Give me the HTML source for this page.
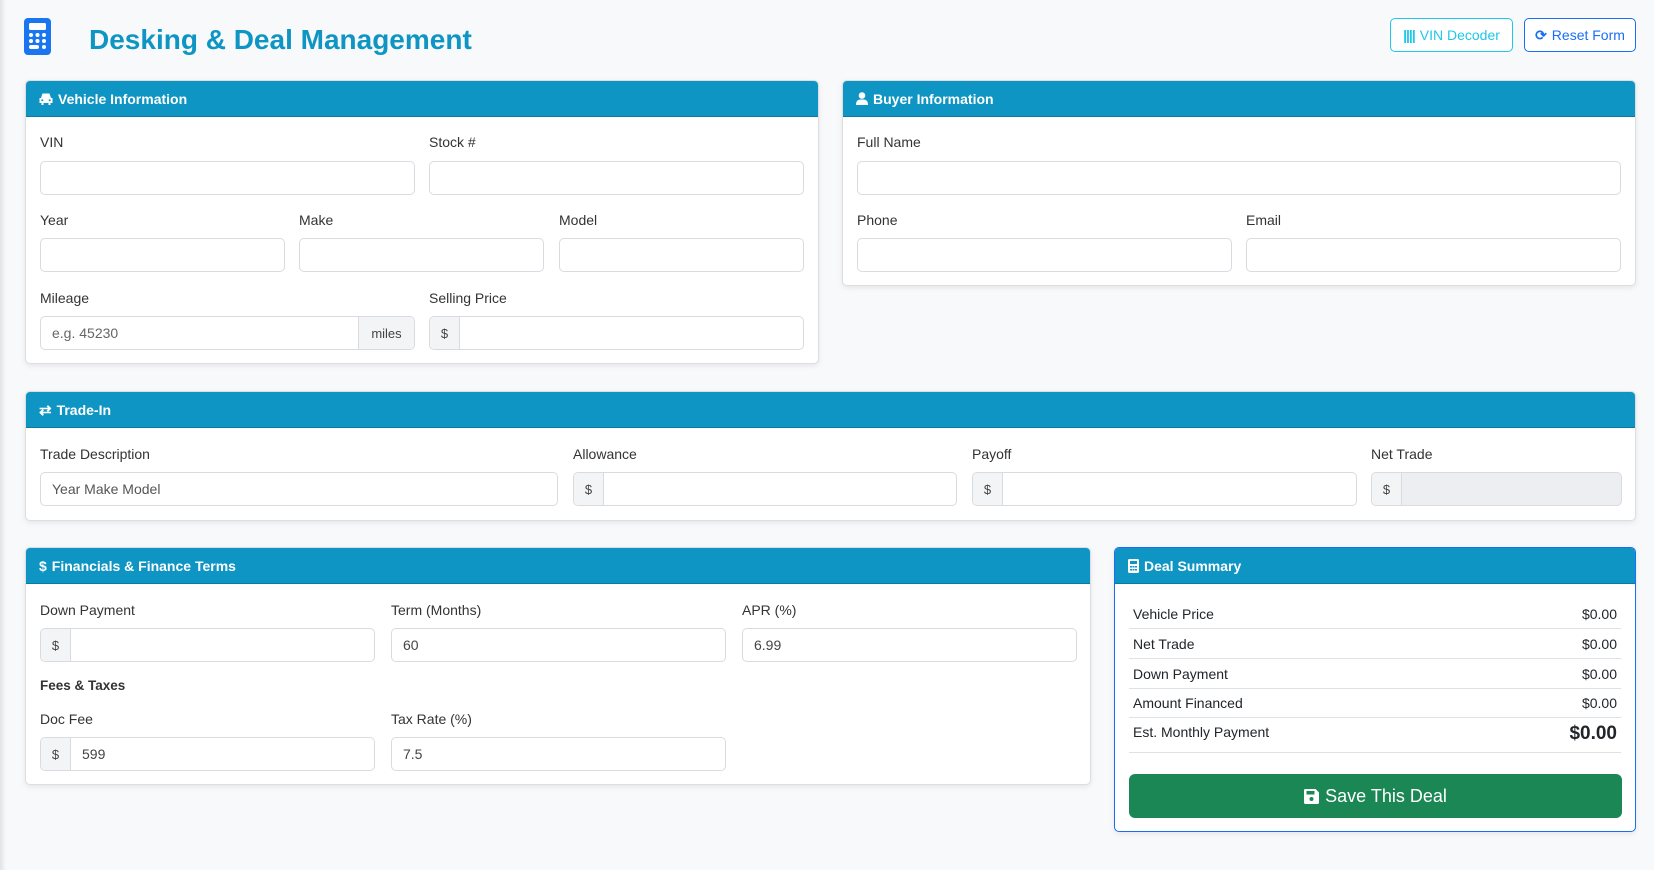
<!DOCTYPE html>
<html><head><meta charset="utf-8"><style>
*{box-sizing:border-box;margin:0;padding:0}
body{width:1654px;height:870px;background:#f8f9fb;font-family:"Liberation Sans",sans-serif;color:#212529;position:relative;overflow:hidden;font-size:14.5px}
.edge{position:absolute;left:0;top:0;width:6px;height:870px;background:linear-gradient(90deg,#e2e3e6,#f8f9fb)}
.a{position:absolute}
.card{position:absolute;background:#fff;border:1px solid #dcdee2;border-radius:5px;box-shadow:0 2px 6px rgba(0,0,0,.08);overflow:hidden}
.hd{height:36px;background:#0e95c3;color:#fff;font-weight:bold;font-size:14px;display:flex;align-items:center;padding-left:13px;gap:5px;border-bottom:1px solid #0a7aa3}
.lb{position:absolute;font-size:14px;color:#333}
.in{position:absolute;height:34px;border:1px solid #d8dbe0;border-radius:5px;background:#fff;display:flex;align-items:center;font-size:14px;color:#444;overflow:hidden}
.in .pre{height:100%;width:30px;background:#f3f4f6;border-right:1px solid #d8dbe0;display:flex;align-items:center;justify-content:center;font-size:13px;flex:none}
.in .t{padding-left:11px}
.btn{position:absolute;top:18px;height:34px;border-radius:5px;background:#fff;display:flex;align-items:center;justify-content:center;font-size:14px;gap:5px}
.row{position:absolute;left:14px;right:14px;height:30px;border-bottom:1px solid #dee2e6;display:flex;justify-content:space-between;align-items:center;padding:0 4px;font-size:14px}
</style></head><body>
<div class="edge"></div>
<svg class="a" style="left:24px;top:18px" width="27" height="37" viewBox="0 0 27 37"><rect width="27" height="37" rx="4" fill="#1976f0"/><rect x="5" y="5" width="17" height="7" rx="1.5" fill="#fff"/><g fill="#fff"><circle cx="7" cy="17" r="2"/><circle cx="13.5" cy="17" r="2"/><circle cx="20" cy="17" r="2"/><circle cx="7" cy="23" r="2"/><circle cx="13.5" cy="23" r="2"/><circle cx="20" cy="23" r="2"/><rect x="5" y="27" width="10" height="4" rx="2"/><circle cx="20" cy="29" r="2"/></g></svg>
<div class="a" style="left:89px;top:24px;font-size:28px;font-weight:bold;color:#0e95c3">Desking &amp; Deal Management</div>
<div class="btn" style="left:1390px;width:123px;border:1px solid #1ec8e8;color:#1ec8e8"><span style="letter-spacing:-1px;font-weight:bold">||||</span> VIN Decoder</div>
<div class="btn" style="left:1524px;width:112px;border:1px solid #1a6ef5;color:#1a6ef5"><b>⟳</b> Reset Form</div>

<div class="card" style="left:25px;top:80px;width:794px;height:284px">
<div class="hd"><svg width="14" height="13" viewBox="0 0 14 13"><path d="M2 6 L3.5 1.5 H10.5 L12 6 H13.5 V11 H11.5 V13 H9.5 V11 H4.5 V13 H2.5 V11 H0.5 V6Z" fill="#fff"/><circle cx="3.3" cy="8.3" r="1" fill="#0e95c3"/><circle cx="10.7" cy="8.3" r="1" fill="#0e95c3"/></svg>Vehicle Information</div>
<div class="lb" style="left:14px;top:53px">VIN</div><div class="lb" style="left:403px;top:53px">Stock #</div>
<div class="in" style="left:14px;top:80px;width:375px"></div><div class="in" style="left:403px;top:80px;width:375px"></div>
<div class="lb" style="left:14px;top:131px">Year</div><div class="lb" style="left:273px;top:131px">Make</div><div class="lb" style="left:533px;top:131px">Model</div>
<div class="in" style="left:14px;top:157px;width:245px"></div><div class="in" style="left:273px;top:157px;width:245px"></div><div class="in" style="left:533px;top:157px;width:245px"></div>
<div class="lb" style="left:14px;top:209px">Mileage</div><div class="lb" style="left:403px;top:209px">Selling Price</div>
<div class="in" style="left:14px;top:235px;width:375px"><span class="t" style="flex:1;color:#666">e.g. 45230</span><span class="pre" style="width:56px;border-right:0;border-left:1px solid #d8dbe0">miles</span></div>
<div class="in" style="left:403px;top:235px;width:375px"><span class="pre">$</span></div>
</div>

<div class="card" style="left:842px;top:80px;width:794px;height:206px">
<div class="hd"><svg width="12" height="13" viewBox="0 0 12 13"><circle cx="6" cy="3.5" r="3.3" fill="#fff"/><path d="M0 13 C0 8 2.5 7.5 6 7.5 C9.5 7.5 12 8 12 13Z" fill="#fff"/></svg>Buyer Information</div>
<div class="lb" style="left:14px;top:53px">Full Name</div>
<div class="in" style="left:14px;top:80px;width:764px"></div>
<div class="lb" style="left:14px;top:131px">Phone</div><div class="lb" style="left:403px;top:131px">Email</div>
<div class="in" style="left:14px;top:157px;width:375px"></div><div class="in" style="left:403px;top:157px;width:375px"></div>
</div>

<div class="card" style="left:25px;top:391px;width:1611px;height:130px">
<div class="hd"><span style="font-size:15px">⇄</span>Trade-In</div>
<div class="lb" style="left:14px;top:54px">Trade Description</div><div class="lb" style="left:547px;top:54px">Allowance</div><div class="lb" style="left:946px;top:54px">Payoff</div><div class="lb" style="left:1345px;top:54px">Net Trade</div>
<div class="in" style="left:14px;top:80px;width:518px"><span class="t" style="color:#555">Year Make Model</span></div>
<div class="in" style="left:547px;top:80px;width:384px"><span class="pre">$</span></div>
<div class="in" style="left:946px;top:80px;width:385px"><span class="pre">$</span></div>
<div class="in" style="left:1345px;top:80px;width:251px;background:#eceef1"><span class="pre">$</span></div>
</div>

<div class="card" style="left:25px;top:547px;width:1066px;height:238px">
<div class="hd"><b>$</b> Financials &amp; Finance Terms</div>
<div class="lb" style="left:14px;top:54px">Down Payment</div><div class="lb" style="left:365px;top:54px">Term (Months)</div><div class="lb" style="left:716px;top:54px">APR (%)</div>
<div class="in" style="left:14px;top:80px;width:335px"><span class="pre">$</span></div>
<div class="in" style="left:365px;top:80px;width:335px"><span class="t">60</span></div>
<div class="in" style="left:716px;top:80px;width:335px"><span class="t">6.99</span></div>
<div class="lb" style="left:14px;top:130px;font-weight:bold;font-size:13.5px">Fees &amp; Taxes</div>
<div class="lb" style="left:14px;top:163px">Doc Fee</div><div class="lb" style="left:365px;top:163px">Tax Rate (%)</div>
<div class="in" style="left:14px;top:189px;width:335px"><span class="pre">$</span><span class="t">599</span></div>
<div class="in" style="left:365px;top:189px;width:335px"><span class="t">7.5</span></div>
</div>

<div class="card" style="left:1114px;top:547px;width:522px;height:285px;border-color:#1a6ef5">
<div class="hd"><svg width="11" height="14" viewBox="0 0 11 14"><rect width="11" height="14" rx="1.5" fill="#fff"/><rect x="2" y="2" width="7" height="3" fill="#0e95c3"/><g fill="#0e95c3"><rect x="2" y="7" width="2" height="1.5"/><rect x="4.5" y="7" width="2" height="1.5"/><rect x="7" y="7" width="2" height="1.5"/><rect x="2" y="10" width="2" height="1.5"/><rect x="4.5" y="10" width="2" height="1.5"/><rect x="7" y="10" width="2" height="1.5"/></g></svg>Deal Summary</div>
<div class="row" style="top:51px"><span>Vehicle Price</span><span>$0.00</span></div>
<div class="row" style="top:81px"><span>Net Trade</span><span>$0.00</span></div>
<div class="row" style="top:111px"><span>Down Payment</span><span>$0.00</span></div>
<div class="row" style="top:140px"><span>Amount Financed</span><span>$0.00</span></div>
<div class="row" style="top:170px;height:35px;align-items:flex-start;padding-top:6px"><span>Est. Monthly Payment</span><span style="font-weight:bold;font-size:19px;margin-top:-1px">$0.00</span></div>
<div class="a" style="left:14px;top:226px;width:493px;height:44px;background:#1b8755;border-radius:6px;color:#fff;font-size:18px;display:flex;align-items:center;justify-content:center;gap:6px"><svg width="15" height="15" viewBox="0 0 15 15"><path d="M1.5 0 H11.5 L15 3.5 V13.5 Q15 15 13.5 15 H1.5 Q0 15 0 13.5 V1.5 Q0 0 1.5 0Z" fill="#fff"/><rect x="2.5" y="2" width="8" height="3.5" fill="#1b8755"/><circle cx="7.5" cy="10" r="2" fill="#1b8755"/></svg>Save This Deal</div>
</div>
</body></html>
